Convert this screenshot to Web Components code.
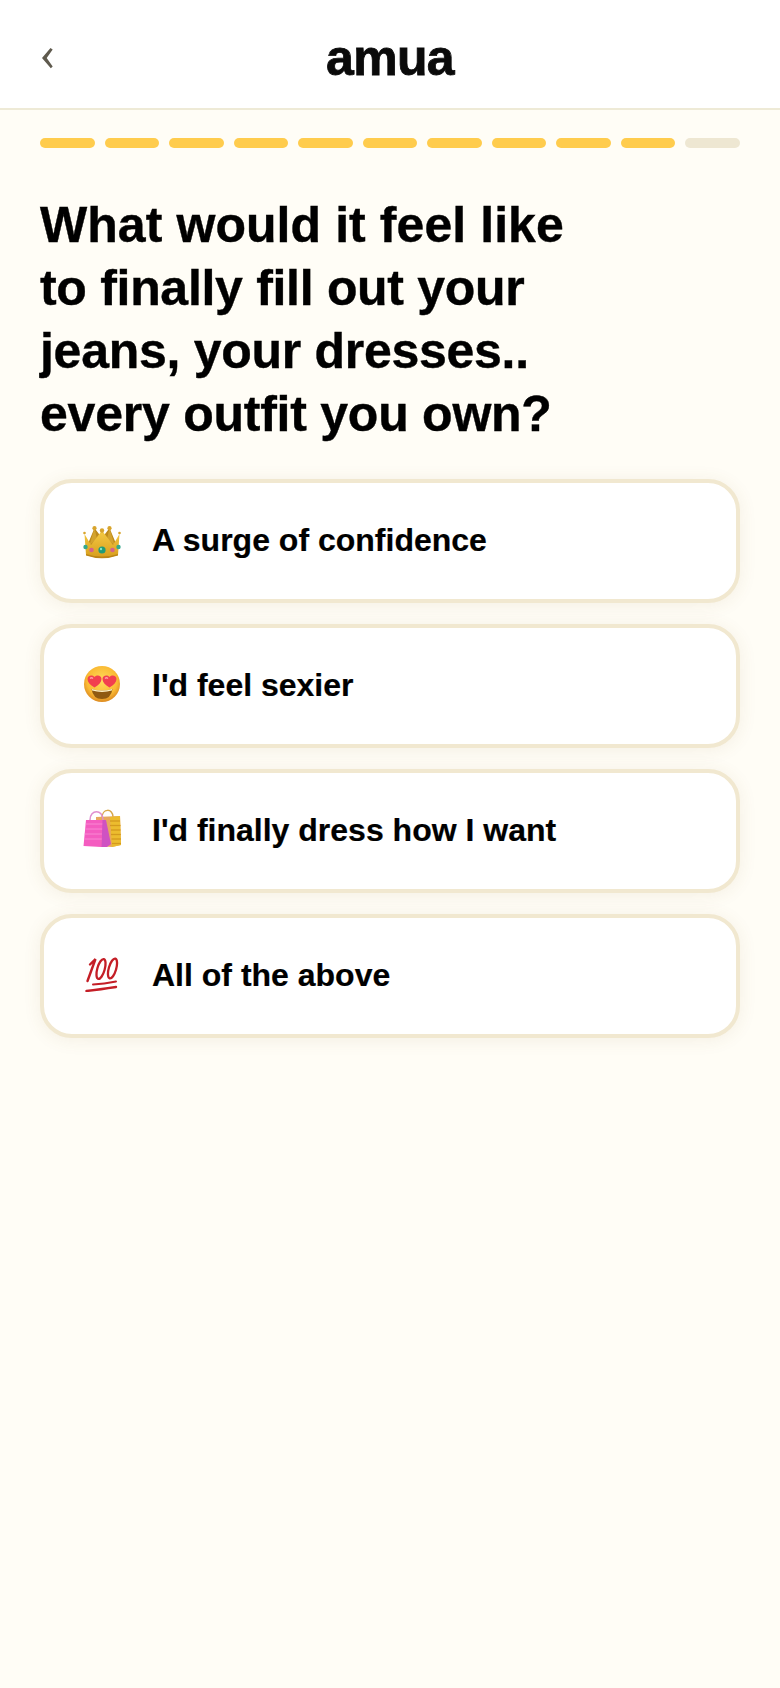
<!DOCTYPE html>
<html lang="en">
<head>
<meta charset="utf-8">
<title>amua</title>
<style>
  html, body { margin: 0; padding: 0; background: #fffdf6; }
  body { font-family: "Liberation Sans", Arial, sans-serif; color: #000; min-height: 1688px; }
</style>
</head>
<body>
<quiz-header></quiz-header>
<quiz-progress total="11" done="10"></quiz-progress>
<quiz-title>
  <div style="letter-spacing:.07px">What would it feel like</div>
  <div style="letter-spacing:-.3px">to finally fill out your</div>
  <div style="letter-spacing:-.28px">jeans, your dresses..</div>
  <div style="letter-spacing:-.24px">every outfit you own?</div>
</quiz-title>
<quiz-options>
  <quiz-option icon="crown">A surge of confidence</quiz-option>
  <quiz-option icon="hearts">I'd feel sexier</quiz-option>
  <quiz-option icon="bags">I'd finally dress how I want</quiz-option>
  <quiz-option icon="hundred">All of the above</quiz-option>
</quiz-options>

<script>
const ICONS = {
  crown: `<svg viewBox="0 0 38 33" width="38" height="33" style="margin-top:2px">
    <defs><linearGradient id="g" x1="0" y1="0" x2="0" y2="1"><stop offset="0" stop-color="#f5cb45"/><stop offset="1" stop-color="#d79d1c"/></linearGradient></defs>
    <path d="M11.500 2 L4 20 L34 20 L26.500 2 L19 12 Z" fill="#bd8a1c"/>
    <path d="M11.500 2 L14 13 L6.500 19 Z M26.500 2 L24 13 L31.500 19 Z" fill="#d3a32e"/>
    <path d="M1.500 8 L3 29 Q19 35 35 29 L36.500 8 L30 19 L19 4.500 L8 19 Z" fill="url(#g)"/>
    <path d="M3 28 Q19 33 35 28 L35 29.500 Q19 35 3 29.500 Z" fill="#bb8516"/>
    <g fill="#d8a42c"><circle cx="1.500" cy="7" r="1.300"/><circle cx="11.500" cy="2.200" r="2.100"/><circle cx="19" cy="4.500" r="2.200"/><circle cx="26.500" cy="2.200" r="2.100"/><circle cx="36.500" cy="7" r="1.300"/></g>
    <circle cx="19" cy="24" r="3.600" fill="#1f9b78"/><circle cx="18" cy="23" r="1.200" fill="#86e4c4"/>
    <circle cx="8.500" cy="24" r="2.300" fill="#d4628a"/><circle cx="29.500" cy="24" r="2.300" fill="#d4628a"/>
    <circle cx="2.500" cy="21" r="2.200" fill="#35a88c"/><circle cx="35.500" cy="21" r="2.200" fill="#35a88c"/>
  </svg>`,
  hearts: `<svg viewBox="0 0 36 36" width="36" height="36" style="margin-top:-4px">
    <defs><radialGradient id="f" cx="50%" cy="42%" r="58%"><stop offset="0" stop-color="#ffdc5c"/><stop offset="0.720" stop-color="#fabb35"/><stop offset="1" stop-color="#dd8a20"/></radialGradient></defs>
    <circle cx="18" cy="18" r="18" fill="url(#f)"/>
    <path d="M7.500 23 Q18 26 28.500 23 Q27 33 18 33 Q9 33 7.500 23 Z" fill="#8f5a12"/>
    <path d="M7.800 23 Q18 26 28.200 23 L27.900 24.600 Q18 27.200 8.100 24.600 Z" fill="#fff3c8"/>
    <path d="M10.500 21.500 C6 19 3.500 16 3.500 13 C3.500 10 7.500 8 10.500 11 C13.500 8 17.500 10 17.500 13 C17.500 16 15 19 10.500 21.500 Z" fill="#f2404f"/>
    <path d="M25.500 21.500 C21 19 18.500 16 18.500 13 C18.500 10 22.500 8 25.500 11 C28.500 8 32.500 10 32.500 13 C32.500 16 30 19 25.500 21.500 Z" fill="#f2404f"/>
    <path d="M6 12.500 Q7.500 11 9 12.500 M21 12.500 Q22.500 11 24 12.500" stroke="#ff9ea6" stroke-width="1.200" fill="none"/>
  </svg>`,
  bags: `<svg viewBox="0 0 38 39" width="38" height="39" style="margin-top:-5px">
    <path d="M19 9 C19 -1 30 -1 30 8" stroke="#d8a84a" stroke-width="1.500" fill="none"/>
    <path d="M13 8 L37 7 L38 36 L29 38 L13 37 Z" fill="#e8a85e"/>
    <path d="M27 8 L37 7 L38 36 L29 38 Z" fill="#ecbc2e"/>
    <g stroke="#d49a1e" stroke-width="1.300"><path d="M27 12 H37"/><path d="M27 16.500 H37.500"/><path d="M28 21 H37.500"/><path d="M28 25.500 H37.800"/><path d="M28.500 30 H38"/><path d="M29 34.500 H38"/></g>
    <path d="M7 11 C7 0 20 0 20 11" stroke="#e08fd0" stroke-width="1.500" fill="none"/>
    <path d="M19 11 L23 11 L28 35 L24 38 L18 38 Z" fill="#cf52c2"/>
    <path d="M3 11 L19.500 11 L18.500 38 L0.500 37 Z" fill="#f45cc0"/>
    <g stroke="#f987d3" stroke-width="1"><path d="M2.800 15 H19.300"/><path d="M2.300 20 H19.100"/><path d="M1.800 25 H18.900"/><path d="M1.300 30 H18.700"/></g>
  </svg>`,
  hundred: `<svg viewBox="0 0 34 35" width="34" height="35" style="margin-top:-3px" fill="none" stroke="#c41e26" stroke-linecap="round">
    <path d="M5 7.500 L10.500 2 L2.500 24" stroke-width="2.400"/>
    <ellipse cx="0" cy="0" rx="3.700" ry="10.300" transform="translate(16 12) rotate(16)" stroke-width="2.300"/>
    <ellipse cx="0" cy="0" rx="3.700" ry="10.300" transform="translate(27.500 11.500) rotate(16)" stroke-width="2.300"/>
    <path d="M8 27.500 Q19 26.800 31 24.500" stroke-width="2"/>
    <path d="M1.500 34 Q14 32.500 31 30" stroke-width="2.400"/>
  </svg>`
};

class QuizHeader extends HTMLElement {
  constructor() {
    super();
    this.attachShadow({ mode: "open" }).innerHTML = `
      <style>
        :host { display: flex; align-items: center; justify-content: center; position: relative;
          height: 108px; background: #fff; border-bottom: 2px solid #eeead6; }
        .back { position: absolute; left: 40px; top: 46px; width: 14px; height: 24px; }
        .logo { font: 700 50px/1 "Liberation Sans", Arial, sans-serif; letter-spacing: -0.700px; color: #0a0a0a;
          -webkit-text-stroke: 0.800px #0a0a0a; margin-top: 7px; }
      </style>
      <svg class="back" viewBox="0 0 14 24"><path d="M10.500 2 L12.700 3.500 L6.700 12 L12.700 20.500 L10.800 22.300 L2 12 Z" fill="#5f5a4e"/></svg>
      <div class="logo">amua</div>
    `;
  }
}

class QuizProgress extends HTMLElement {
  constructor() {
    super();
    this.attachShadow({ mode: "open" }).innerHTML = `
      <style>
        :host { display: flex; gap: 10px; padding: 28px 40px 0; }
        i { flex: 1; height: 10px; border-radius: 5px; background: #eee7d2; }
        i.on { background: #ffcc4d; }
      </style>
    `;
  }
  connectedCallback() {
    const total = +this.getAttribute("total");
    const done = +this.getAttribute("done");
    for (let n = 0; n < total; n++) {
      const seg = document.createElement("i");
      if (n < done) seg.className = "on";
      this.shadowRoot.appendChild(seg);
    }
  }
}

class QuizTitle extends HTMLElement {
  constructor() {
    super();
    this.attachShadow({ mode: "open" }).innerHTML = `
      <style>
        :host { display: block; padding: 46px 40px 0; font: 700 50px/63px "Liberation Sans", Arial, sans-serif; color: #000;
          -webkit-text-stroke: 0.400px #000; }
      </style>
      <slot></slot>
    `;
  }
}

class QuizOptions extends HTMLElement {
  constructor() {
    super();
    this.attachShadow({ mode: "open" }).innerHTML = `
      <style>
        :host { display: flex; flex-direction: column; gap: 21px; padding: 33px 40px 0; }
      </style>
      <slot></slot>
    `;
  }
}

class QuizOption extends HTMLElement {
  constructor() {
    super();
    this.attachShadow({ mode: "open" }).innerHTML = `
      <style>
        :host { display: flex; align-items: center; box-sizing: border-box; height: 124px; padding: 0 0 0 37px;
          background: #fff; border: 4px solid #f1e8d0; border-radius: 32px;
          box-shadow: 0 2px 18px rgba(130, 100, 40, 0.09);
          font: 700 32px/1 "Liberation Sans", Arial, sans-serif; color: #000; -webkit-text-stroke: 0.200px #000; }
        .icon { width: 42px; height: 40px; margin-right: 29px; display: flex; align-items: center; justify-content: center; flex: none; }
        .label { margin-bottom: 2px; }
      </style>
      <span class="icon"></span><span class="label"><slot></slot></span>
    `;
  }
  connectedCallback() {
    this.shadowRoot.querySelector(".icon").innerHTML = ICONS[this.getAttribute("icon")];
  }
}

customElements.define("quiz-header", QuizHeader);
customElements.define("quiz-progress", QuizProgress);
customElements.define("quiz-title", QuizTitle);
customElements.define("quiz-options", QuizOptions);
customElements.define("quiz-option", QuizOption);
</script>
</body>
</html>
